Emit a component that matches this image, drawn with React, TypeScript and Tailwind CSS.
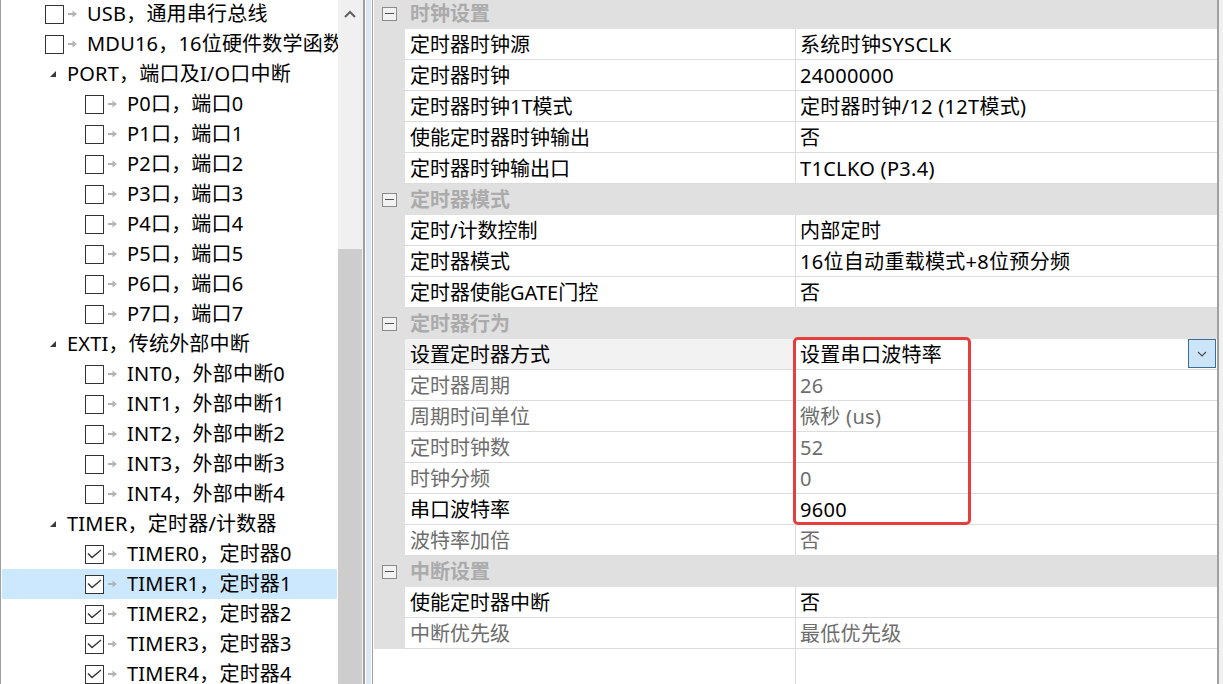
import React from "react";

type TreeItem =
  | { kind: "leaf"; level: 1 | 2; checked: boolean; label: string; selected?: boolean }
  | { kind: "parent"; label: string };

const tree: TreeItem[] = [
  { kind: "leaf", level: 1, checked: false, label: "USB，通用串行总线" },
  { kind: "leaf", level: 1, checked: false, label: "MDU16，16位硬件数学函数" },
  { kind: "parent", label: "PORT，端口及I/O口中断" },
  ...[0, 1, 2, 3, 4, 5, 6, 7].map(
    (i) => ({ kind: "leaf", level: 2, checked: false, label: `P${i}口，端口${i}` }) as TreeItem
  ),
  { kind: "parent", label: "EXTI，传统外部中断" },
  ...[0, 1, 2, 3, 4].map(
    (i) => ({ kind: "leaf", level: 2, checked: false, label: `INT${i}，外部中断${i}` }) as TreeItem
  ),
  { kind: "parent", label: "TIMER，定时器/计数器" },
  ...[0, 1, 2, 3, 4].map(
    (i) =>
      ({
        kind: "leaf",
        level: 2,
        checked: true,
        label: `TIMER${i}，定时器${i}`,
        selected: i === 1,
      }) as TreeItem
  ),
];

type PropRow =
  | { kind: "cat"; label: string }
  | { kind: "row"; label: string; value: string; disabled?: boolean; selected?: boolean };

const props: PropRow[] = [
  { kind: "cat", label: "时钟设置" },
  { kind: "row", label: "定时器时钟源", value: "系统时钟SYSCLK" },
  { kind: "row", label: "定时器时钟", value: "24000000" },
  { kind: "row", label: "定时器时钟1T模式", value: "定时器时钟/12 (12T模式)" },
  { kind: "row", label: "使能定时器时钟输出", value: "否" },
  { kind: "row", label: "定时器时钟输出口", value: "T1CLKO (P3.4)" },
  { kind: "cat", label: "定时器模式" },
  { kind: "row", label: "定时/计数控制", value: "内部定时" },
  { kind: "row", label: "定时器模式", value: "16位自动重载模式+8位预分频" },
  { kind: "row", label: "定时器使能GATE门控", value: "否" },
  { kind: "cat", label: "定时器行为" },
  { kind: "row", label: "设置定时器方式", value: "设置串口波特率", selected: true },
  { kind: "row", label: "定时器周期", value: "26", disabled: true },
  { kind: "row", label: "周期时间单位", value: "微秒 (us)", disabled: true },
  { kind: "row", label: "定时时钟数", value: "52", disabled: true },
  { kind: "row", label: "时钟分频", value: "0", disabled: true },
  { kind: "row", label: "串口波特率", value: "9600" },
  { kind: "row", label: "波特率加倍", value: "否", disabled: true },
  { kind: "cat", label: "中断设置" },
  { kind: "row", label: "使能定时器中断", value: "否" },
  { kind: "row", label: "中断优先级", value: "最低优先级", disabled: true },
];

function Checkbox({ checked }: { checked: boolean }) {
  return (
    <div className="w-[19px] h-[19px] border border-[#333333] bg-white flex items-center justify-center shrink-0">
      {checked && (
        <svg width="15" height="10" viewBox="0 0 15 10">
          <polyline points="1,4.5 5,8.5 14,1" fill="none" stroke="#333333" strokeWidth="1.4" />
        </svg>
      )}
    </div>
  );
}

function SmallArrow() {
  return (
    <svg width="9" height="8" viewBox="0 0 9 8" className="shrink-0">
      <line x1="0" y1="4" x2="5" y2="4" stroke="#b4b4b4" strokeWidth="2" />
      <polygon points="4.5,0.5 9,4 4.5,7.5" fill="#b4b4b4" />
    </svg>
  );
}

function Expander() {
  return (
    <svg width="6" height="6" viewBox="0 0 6 6" className="shrink-0">
      <polygon points="6,0 6,6 0,6" fill="#3a3a3a" />
    </svg>
  );
}

function TreeRow({ item }: { item: TreeItem }) {
  if (item.kind === "parent") {
    return (
      <div className="h-[30px] flex items-center pl-[48px]">
        <Expander />
        <span className="ml-[11px] tracking-[0.2px]">{item.label}</span>
      </div>
    );
  }
  return (
    <div
      className={
        "h-[30px] flex items-center " +
        (item.level === 1 ? "pl-[43px] " : "pl-[83px] ") +
        (item.selected ? "bg-[#cce8ff]" : "")
      }
    >
      <Checkbox checked={item.checked} />
      <span className="ml-[4px] flex items-center">
        <SmallArrow />
      </span>
      <span className="ml-[10px] tracking-[0.2px]">{item.label}</span>
    </div>
  );
}

function MinusBox() {
  return (
    <div className="w-[15px] h-[14px] border border-[#8a8a8a] bg-[#f2f2f2] flex items-center justify-center">
      <div className="w-[9px] h-[1px] bg-[#555555]" />
    </div>
  );
}

function PropGridRow({ row }: { row: PropRow }) {
  if (row.kind === "cat") {
    return (
      <div className="h-[31px] flex items-center bg-[#e0e0e0] shrink-0">
        <div className="w-[31px] flex items-center pl-[8px]">
          <MinusBox />
        </div>
        <span className="pl-[5px] pt-[1px] font-bold text-[#ababab]">{row.label}</span>
      </div>
    );
  }
  const color = row.disabled ? "text-[#6d6d6d]" : "text-black";
  return (
    <div className="h-[31px] flex shrink-0">
      <div className="w-[31px] bg-[#e0e0e0]" />
      <div
        className={
          "w-[390px] flex items-center pl-[5px] pt-[1px] border-b border-[#dcdcdc] " +
          color +
          (row.selected ? " bg-[#f2f2f2]" : " bg-white")
        }
      >
        {row.label}
      </div>
      <div className="w-[1px] bg-[#dcdcdc]" />
      <div className={"flex-1 flex items-center pl-[4px] border-b border-[#dcdcdc] bg-white " + color}>
        <span className="pt-[1px] tracking-[0.3px]">{row.value}</span>
        {row.selected && (
          <div className="ml-auto mr-[1px] w-[28px] h-[29px] mt-[-1px] border border-[#3c6e9a] bg-[#cce4f7] flex items-center justify-center">
            <svg width="10" height="6" viewBox="0 0 10 6">
              <polyline points="1,1 5,5 9,1" fill="none" stroke="#4a4a4a" strokeWidth="1.1" />
            </svg>
          </div>
        )}
      </div>
    </div>
  );
}

export default function App() {
  return (
    <div
      className="relative w-[1223px] h-[684px] overflow-hidden bg-white flex text-[20px] text-black"
      style={{ fontFamily: "'Noto Sans', 'Noto Sans CJK SC', sans-serif" }}
    >
      {/* Tree panel */}
      <div className="w-[338px] h-full border-l border-[#a0a0a0] px-[1px] overflow-hidden whitespace-nowrap">
        <div className="mt-[-1px] leading-none">
          {tree.map((item, i) => (
            <TreeRow key={i} item={item} />
          ))}
        </div>
      </div>
      {/* Tree scrollbar */}
      <div className="w-[24px] h-full bg-[#f0f0f0] flex flex-col">
        <div className="h-[249px] flex justify-center pt-[10px]">
          <svg width="12" height="8" viewBox="0 0 12 8">
            <polyline points="1,7 6,2 11,7" fill="none" stroke="#606060" strokeWidth="2" />
          </svg>
        </div>
        <div className="flex-1 bg-[#cdcdcd]" />
      </div>
      {/* Splitter */}
      <div className="w-[12px] h-full flex">
        <div className="w-[1px] bg-[#f0f0f0]" />
        <div className="w-[2px] bg-[#a0a0a0]" />
        <div className="w-[1px] bg-white" />
        <div className="w-[5px] bg-[#dbe7f2]" />
        <div className="w-[1px] bg-white" />
        <div className="w-[1px] bg-[#a0a0a0]" />
        <div className="w-[1px] bg-white" />
      </div>
      {/* Property grid */}
      <div className="w-[843px] h-full flex flex-col overflow-hidden whitespace-nowrap leading-none">
        <div className="mt-[-2px] flex flex-col">
          {props.map((row, i) => (
            <PropGridRow key={i} row={row} />
          ))}
        </div>
        <div className="flex-1 flex">
          <div className="w-[421px]" />
          <div className="w-[1px] bg-[#dcdcdc]" />
          <div className="flex-1" />
        </div>
      </div>
      <div className="w-[2px] h-full bg-[#a0a0a0]" />
      <div className="w-[4px] h-full bg-[#f0f0f0]" />

      {/* Red annotation box */}
      <div className="absolute left-[793px] top-[337px] w-[178px] h-[188px] border-[3px] border-[#e53e3e] rounded-[5px] pointer-events-none" />
    </div>
  );
}
